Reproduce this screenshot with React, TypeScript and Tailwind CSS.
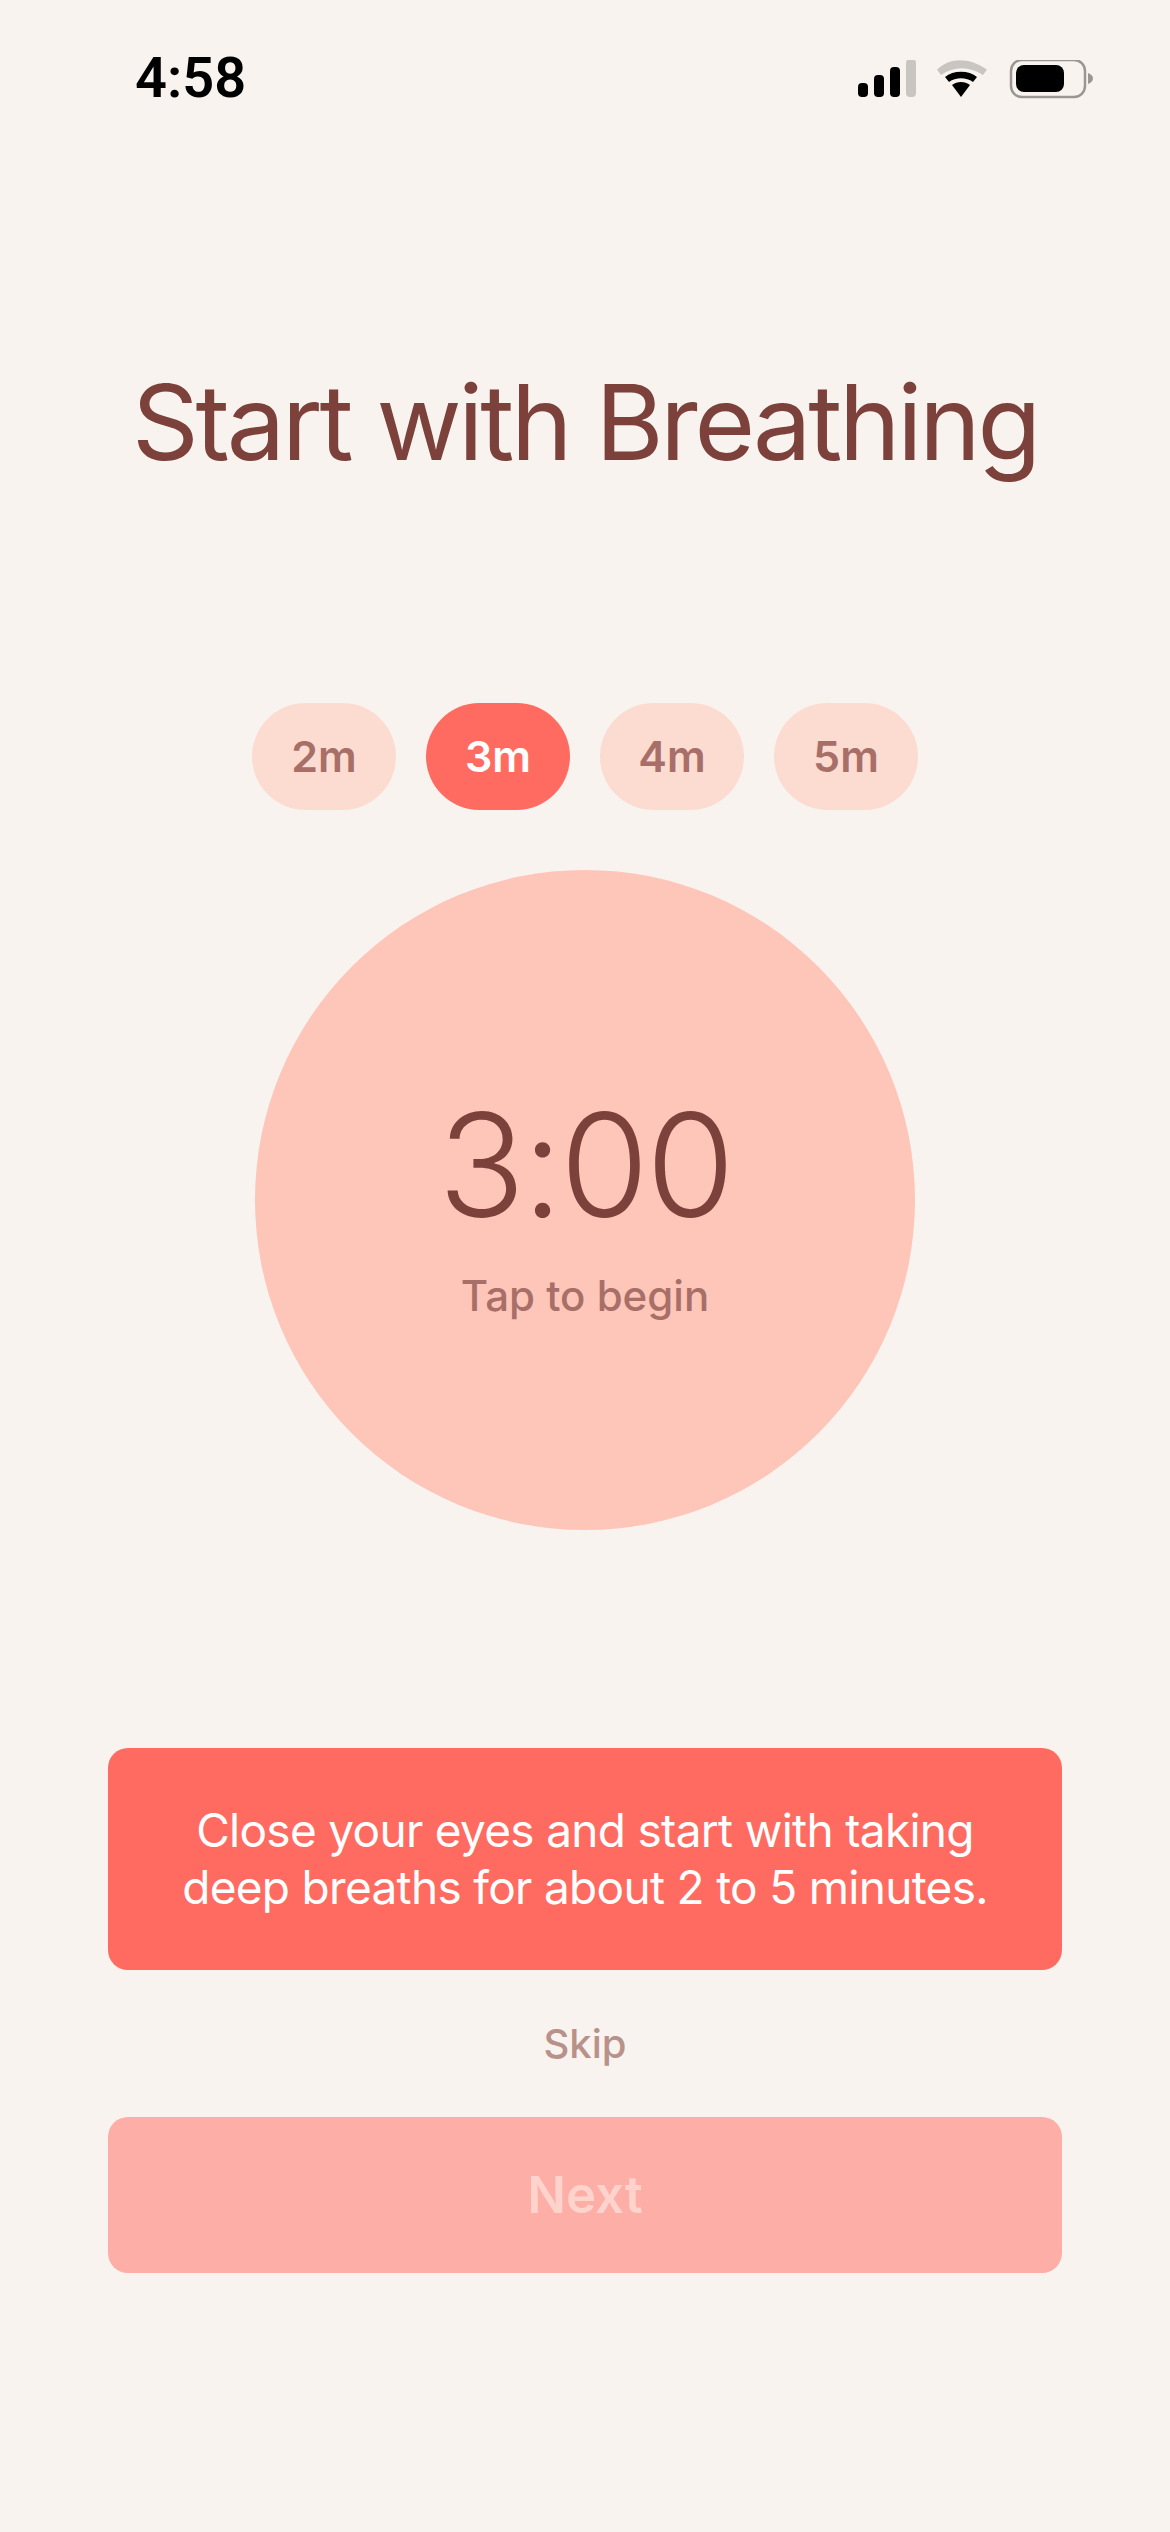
const durations = ["2m", "3m", "4m", "5m"];

function StatusIcons() {
  return (
    <svg width="236" height="40" viewBox="0 0 236 40" fill="none">
      <rect x="0" y="23" width="10" height="14" rx="4" fill="#000" />
      <rect x="16" y="15" width="10" height="22" rx="4" fill="#000" />
      <rect x="32" y="7" width="10" height="30" rx="4" fill="#000" />
      <rect x="48" y="-1" width="10" height="38" rx="4" fill="#c9c5c1" />
      <path d="M79 9.5C92 -3 111 -3 129 9.5L125 15C111 6 96 6 83 15Z" fill="#c9c5c1" />
      <path d="M87 17C95 10 111 10 119 17L115 22C108 17 98 17 91 22Z" fill="#000" />
      <path d="M94 25C99 21 107 21 112 25L103 37Z" fill="#000" />
      <rect x="153" y="0" width="74" height="37" rx="11" stroke="#9b9693" strokeWidth="2.5" />
      <rect x="158" y="5" width="48" height="27" rx="8" fill="#000" />
      <path d="M230 13C233 14 235 16 235 18.5C235 21 233 23 230 24Z" fill="#9b9693" />
    </svg>
  );
}

export default function App() {
  return (
    <div className="flex h-[2532px] w-[1170px] flex-col items-center bg-[#f8f3ef] font-['Inter',sans-serif]">
      <div className="flex h-[100px] w-full items-end justify-between pl-[135px] pr-[76px]">
        <span className="-mb-[6px] font-['Roboto',sans-serif] text-[56px] leading-none font-semibold text-black">4:58</span>
        <StatusIcons />
      </div>

      <h1 className="mt-[262px] text-[104px] leading-[120px] font-normal tracking-[-3.2px] text-[#7c413b]">Start with Breathing</h1>

      <div className="mt-[221px] flex gap-[30px]">
        {durations.map((d) => (
          <div
            key={d}
            className={
              d === "3m"
                ? "flex h-[107px] w-[144px] items-center justify-center rounded-full bg-[#ff6b60] text-[43px] font-semibold text-white"
                : "flex h-[107px] w-[144px] items-center justify-center rounded-full bg-[#fcdcd1] text-[43px] font-semibold text-[#a76f68]"
            }
          >
            {d}
          </div>
        ))}
      </div>

      <div className="mt-[60px] flex h-[660px] w-[660px] flex-col items-center rounded-full bg-[#fec5b9] pt-[215px]">
        <div className="text-[144px] leading-[160px] font-light tracking-[-3px] text-[#7c413b]">3:00</div>
        <div className="mt-[26px] text-[42px] leading-[50px] font-medium text-[#a76f68]">Tap to begin</div>
      </div>

      <div className="mt-[218px] flex h-[222px] w-[954px] items-center justify-center rounded-[20px] bg-[#ff6b60] text-center text-[46px] leading-[57px] tracking-[-0.7px] text-white">
        <p>
          Close your eyes and start with taking
          <br />
          deep breaths for about 2 to 5 minutes.
        </p>
      </div>

      <div className="mt-[50px] text-[40px] leading-[48px] font-medium text-[#b8928a]">Skip</div>

      <div className="mt-[49px] flex h-[156px] w-[954px] items-center justify-center rounded-[20px] bg-[#fdaea6] text-[51px] font-semibold text-[#fed3cc]">
        Next
      </div>
    </div>
  );
}
